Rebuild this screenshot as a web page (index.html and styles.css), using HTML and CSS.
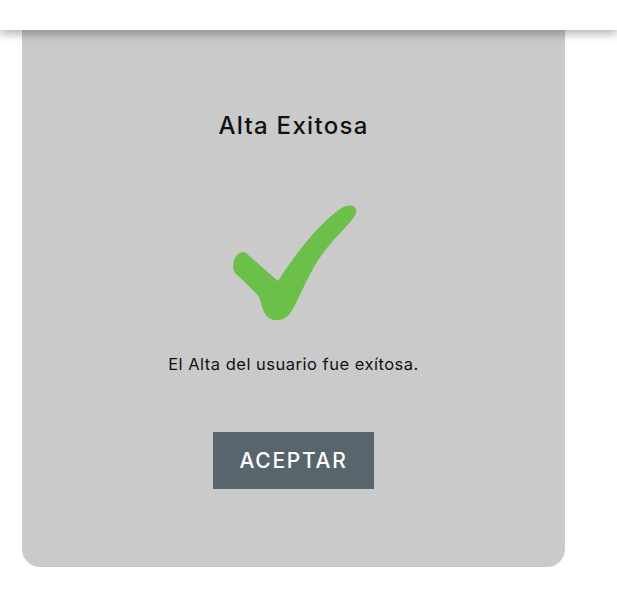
FILE: index.html
```
<!DOCTYPE html>
<html lang="es">
<head>
    <meta charset="UTF-8">
    <meta name="viewport" content="width=device-width, initial-scale=1.0">
    <title>Alta Exitosa</title>
    <link rel="stylesheet" href="styles.css">
</head>
<body>
    <div class="topbar"></div>
    <div class="card">
        <h2 class="title">Alta Exitosa</h2>
        <svg class="check" width="128" height="120" viewBox="-3 0 128 120">
            <path d="M 13 49 L 45 77 C 62 50, 86 20, 107 5 C 116 -1, 125 1, 123 9 C 121 17, 102 32, 88 52 C 74 72, 66 96, 58 108 C 51 119, 36 119, 31 108 C 28 101, 28 94, 22 88 L 3 70 C -5 61, 5 44, 13 49 Z" fill="#6cc04a"/>
        </svg>
        <p class="message">El Alta del usuario fue exítosa.</p>
        <button class="btn">ACEPTAR</button>
    </div>
</body>
</html>
```

FILE: styles.css
```
body {
    margin: 0;
    background-color: #fff;
    font-family: "Inter", "Lato", sans-serif;
}
.topbar {
    position: relative;
    z-index: 2;
    height: 30px;
    background-color: #fff;
    box-shadow: 0 4px 10px rgba(0, 0, 0, 0.3);
}
.card {
    width: 543px;
    margin-left: 22px;
    padding: 83px 0 78px;
    background-color: #cacaca;
    border-radius: 0 0 18px 18px;
    display: flex;
    flex-direction: column;
    align-items: center;
}
.title {
    margin: 0;
    font-size: 24px;
    font-weight: 500;
    line-height: 26px;
    letter-spacing: 1.3px;
    color: #111;
}
.check {
    display: block;
    margin-top: 65px;
}
.message {
    margin: 30px 0 0;
    font-size: 16.5px;
    line-height: 20px;
    letter-spacing: 0.5px;
    color: #111;
}
.btn {
    margin-top: 58px;
    width: 161px;
    height: 57px;
    border: none;
    background-color: #59656d;
    color: #fff;
    font-family: inherit;
    font-size: 21px;
    font-weight: 500;
    letter-spacing: 1.7px;
    cursor: pointer;
}
```
